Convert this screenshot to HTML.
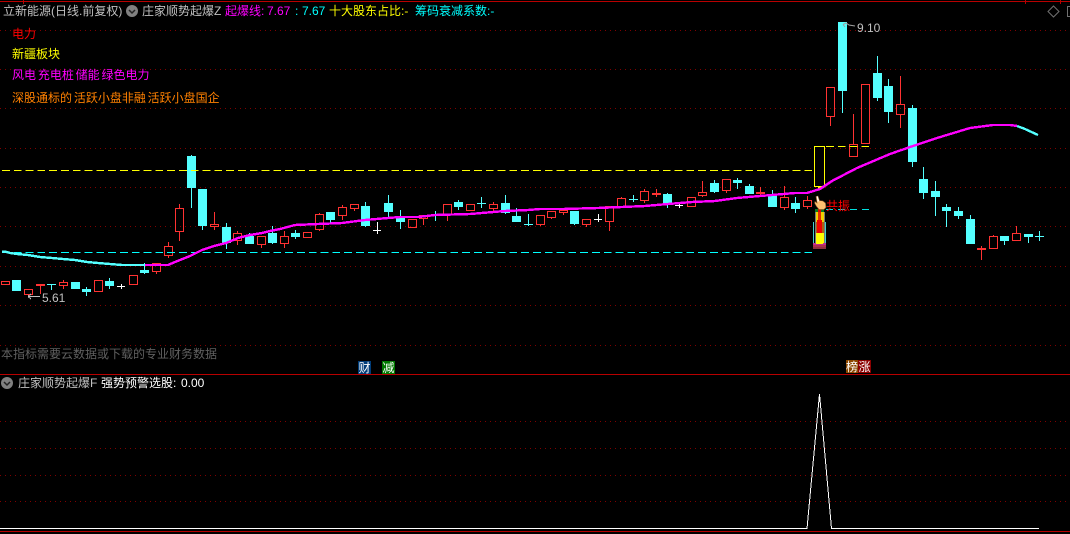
<!DOCTYPE html>
<html><head><meta charset="utf-8"><style>
html,body{margin:0;padding:0;background:#000;width:1070px;height:534px;overflow:hidden}
svg{display:block;position:absolute;left:0;top:0}
text{font-family:"WenQuanYi Zen Hei","Liberation Sans","Noto Sans CJK SC",sans-serif;font-size:12px;white-space:pre}
.n{font-family:"Liberation Sans",sans-serif}
</style></head><body>
<svg width="1070" height="534" viewBox="0 0 1070 534" xmlns="http://www.w3.org/2000/svg">
<rect width="1070" height="534" fill="#000"/>
<g shape-rendering="crispEdges">
<path d="M0 30.5H1070M0 69.5H1070M0 108.5H1070M0 148.5H1070M0 187.5H1070M0 226.5H1070M0 266.5H1070M0 305.5H1070M0 345.5H1070M0 421.5H1070M0 448.5H1070M0 475.5H1070M0 501.5H1070" stroke="#800000" stroke-dasharray="1 4" fill="none"/>
<path d="M0 1.5H1070M0 374.5H1070M0 531.5H1070" stroke="#b80000" fill="none"/>
<path d="M23.5 0V4M1025.5 0V4M1060.5 0V4" stroke="#b80000" fill="none"/>
<!-- red candles -->
<path fill="none" stroke="#ff3232" d="M1.5 281.5h8v3h-8zM24.5 289.5h8v5h-8zM28.5 295V297M36 284.5h9M36 285.5h9M40.5 284V294M59.5 282.5h8v3h-8zM63.5 280V282M63.5 286V289M94.5 280.5h8v11h-8zM129.5 275.5h8v9h-8zM152.5 263.5h8v8h-8zM156.5 272V274M164.5 246.5h8v9h-8zM168.5 242V246M168.5 256V258M175.5 208.5h8v23h-8zM179.5 204V208M179.5 232V241M210.5 224.5h8v2h-8zM214.5 212V224M214.5 227V230M233.5 233.5h8v7h-8zM237.5 231V233M237.5 241V245M257.5 236.5h8v8h-8zM261.5 245V248M280.5 236.5h8v7h-8zM284.5 231V236M284.5 244V248M303.5 232.5h8v5h-8zM315.5 214.5h8v15h-8zM319.5 213V214M319.5 230V231M338.5 207.5h8v8h-8zM342.5 205V207M342.5 216V220M350.5 204.5h8v4h-8zM354.5 209V211M408.5 219.5h8v8h-8zM419.5 215.5h8v3h-8zM423.5 219V225M443.5 204.5h8v10h-8zM447.5 215V221M466.5 204.5h8v6h-8zM489.5 204.5h8v4h-8zM493.5 202V204M493.5 209V211M536.5 215.5h8v9h-8zM540.5 225V226M547.5 211.5h8v6h-8zM551.5 218V219M559.5 210.5h8v2h-8zM563.5 213V215M582.5 219.5h8v5h-8zM586.5 225V227M605.5 206.5h8v15h-8zM609.5 222V231M617.5 198.5h8v9h-8zM621.5 197V198M640.5 191.5h8v9h-8zM644.5 189V191M644.5 201V203M652 193.5h9M652 194.5h9M656.5 189V197M687.5 197.5h8v9h-8zM698.5 192.5h8v3h-8zM702.5 181V192M702.5 196V197M722.5 179.5h8v11h-8zM726.5 191V193M756 193.5h9M756 192.5h9M760.5 187V196M780.5 197.5h8v10h-8zM784.5 186V197M784.5 208V210M803.5 200.5h8v6h-8zM807.5 196V200M807.5 207V209M826.5 87.5h8v29h-8zM830.5 117V126M849.5 144.5h8v12h-8zM853.5 114V144M861.5 84.5h8v59h-8zM896.5 104.5h8v10h-8zM900.5 76V104M900.5 115V128M977 248.5h9M977 249.5h9M981.5 246V260M989.5 236.5h8v12h-8zM993.5 235V236M1012.5 233.5h8v7h-8zM1016.5 226V233"/>
<!-- cyan bodies -->
<path fill="#54ffff" d="M12 280h9v11h-9zM71 282h9v7h-9zM82 289h9v3h-9zM105 281h9v5h-9zM140 270h9v3h-9zM187 156h9v32h-9zM198 189h9v37h-9zM222 227h9v16h-9zM245 236h9v8h-9zM268 233h9v10h-9zM291 233h9v4h-9zM326 212h9v8h-9zM361 206h9v20h-9zM384 203h9v9h-9zM396 216h9v6h-9zM431 215h9v1h-9zM454 202h9v5h-9zM501 203h9v10h-9zM512 216h9v6h-9zM570 211h9v13h-9zM663 194h9v10h-9zM710 183h9v9h-9zM733 180h9v3h-9zM745 186h9v8h-9zM768 196h9v11h-9zM791 203h9v6h-9zM838 22h9v69h-9zM873 73h9v25h-9zM884 86h9v26h-9zM908 108h9v54h-9zM919 179h9v14h-9zM931 191h9v6h-9zM942 207h9v4h-9zM954 211h9v5h-9zM966 219h9v25h-9zM1000 236h9v5h-9zM1024 234h9v3h-9z"/>
<path fill="none" stroke="#54ffff" d="M47 284.5h9M51.5 284V290M86.5 287V296M109.5 278V289M144.5 263V274M191.5 155V208M202.5 189V230M226.5 223V249M249.5 233V244M272.5 226V244M295.5 230V239M330.5 212V223M365.5 202V227M388.5 195V217M400.5 210V229M435.5 211V221M458.5 200V210M477 203.5h9M481.5 197V208M505.5 195V214M516.5 208V222M524 224.5h9M528.5 214V226M574.5 211V225M629 199.5h9M633.5 195V202M667.5 193V208M714.5 180V193M737.5 178V189M749.5 184V194M772.5 190V207M795.5 197V213M842.5 22V113M877.5 56V101M888.5 79V123M912.5 105V167M923.5 167V199M935.5 181V216M946.5 204V227M958.5 207V219M970.5 215V244M1004.5 236V245M1028.5 234V243M1035 236.5h9M1039.5 231V241"/>
<!-- white crosses -->
<path fill="none" stroke="#fff" d="M117 286.5h8M121.5 284V289M373 230.5h8M377.5 222V234M594 219.5h8M598.5 214V222M675 205.5h8M679.5 202V208"/>
<!-- yellow key candle -->
<rect x="814.5" y="146.5" width="10" height="40" fill="#000" stroke="#ffff00"/>
<rect x="818" y="187" width="3" height="3" fill="#ffff00"/>
<!-- dashes -->
<path fill="none" stroke="#ffff00" stroke-dasharray="7.8 4" d="M2 170.5H813M826 146.5H870"/>
<path fill="none" stroke="#00ffff" stroke-dasharray="7.8 4" d="M2 252.5H813"/>
<path fill="none" stroke="#00e0e0" stroke-dasharray="7 5" d="M826 209.5H870"/>
<!-- MA lines -->
<path fill="none" stroke="#54ffff" stroke-width="2.4" d="M2 252L5 251.5L10 253L17 254L28 255L40 257L52 258L63 259L75 260L87 262L98 263L110 264L122 265L145 265"/>
<path fill="none" stroke="#ff00ff" stroke-width="2.4" d="M145 265L168 265L175 262L190 256L202 250L214 246L226 243L238 238L250 235L262 233L270 231L280 229L295 225L318 224L342 223L365 220L388 218L400 217L418 217L435 215L470 214L505 211L528 210L540 209L563 209L598 208L622 207L645 206L668 204L692 202L715 201L737 198L760 196L772 195L795 193L807 193L820 189L832 181L857 168L890 154L913 146L937 138L970 128L993 125L1010 125L1017 126"/>
<path fill="none" stroke="#54ffff" stroke-width="2.4" d="M1017 126L1025 129L1038 135"/>
<!-- resonance stack -->
<rect x="815" y="209" width="9" height="3" fill="#0a7a20"/>
<rect x="818" y="209" width="3" height="3" fill="#e00000"/>
<rect x="815" y="212" width="10" height="32" fill="#777"/>
<rect x="816" y="212" width="8" height="10" fill="#f0d000"/>
<rect x="818" y="212" width="3" height="10" fill="#e03000"/>
<rect x="816" y="222" width="8" height="11" fill="#b06010"/>
<rect x="817" y="220" width="5" height="13" fill="#ee0000"/>
<rect x="816" y="233" width="8" height="11" fill="#ffff00"/>
<rect x="813" y="222" width="1" height="22" fill="#40d0d0"/>
<rect x="825" y="222" width="1" height="22" fill="#40d0d0"/>
<rect x="813" y="243" width="13" height="2" fill="#c03090"/>
<rect x="816" y="241" width="7" height="3" fill="#ffff00"/>
<rect x="813" y="245" width="13" height="2" fill="#b03050"/>
<rect x="813" y="247" width="13" height="2" fill="#903040"/>
</g>
<!-- hand -->
<path d="M816 196.5L818 196L819.5 200.5L823 201L825.5 203L826 207.5L824 209.5L819 209.5L816.5 206.5L814.5 203L815 201.5L817 203Z" fill="#ffc070" stroke="#7a4a20" stroke-width=".6"/>
<path d="M816.5 196.5L817.8 196.2L819 201L817.8 202Z" fill="#fff"/>
<!-- annotations -->
<path d="M28 296.5H40M28 296.5L31 294M28 296.5L31 299" stroke="#c0c0c0" fill="none" shape-rendering="crispEdges"/>
<text class="n" x="42" y="302" fill="#c0c0c0">5.61</text>
<path d="M843 24.5L846 23L849 25L855 26M843 24.5L845 27" stroke="#a0a0a0" fill="none"/>
<text class="n" x="857" y="32" fill="#c0c0c0">9.10</text>
<!-- header -->
<text x="3" y="15" fill="#c0c0c0">立新能源(日线.前复权)</text>
<circle cx="132" cy="11" r="6" fill="#808080"/>
<path d="M129 10l3 3 3-3" stroke="#222" stroke-width="1.5" fill="none"/>
<text x="142" y="15" fill="#c0c0c0">庄家顺势起爆Z</text>
<text x="225" y="15" fill="#ff00ff">起爆线:</text>
<text class="n" x="267" y="15" fill="#ff00ff">7.67</text>
<text class="n" x="295" y="15" fill="#00ffff">:</text>
<text class="n" x="302" y="15" fill="#00ffff">7.67</text>
<text x="329" y="15" fill="#ffff00">十大股东占比:-</text>
<text x="415" y="15" fill="#00ffff">筹码衰减系数:-</text>
<text x="12" y="38" fill="#ff0000">电力</text>
<text x="12" y="58" fill="#ffff00">新疆板块</text>
<text x="12" y="79" fill="#ff00ff" word-spacing="-1.5">风电 充电桩 储能 绿色电力</text>
<text x="12" y="102" fill="#ff8000" word-spacing="-1.5">深股通标的 活跃小盘非融 活跃小盘国企</text>
<text x="1" y="358" fill="#606060">本指标需要云数据或下载的专业财务数据</text>
<text x="826" y="210" fill="#ff0000">共振</text>
<!-- tags -->
<g shape-rendering="crispEdges">
<rect x="358" y="361" width="13" height="13" fill="#003c78"/>
<rect x="382" y="361" width="13" height="13" fill="#007800"/>
<rect x="846" y="360" width="12" height="13" fill="#8c4800"/>
<rect x="858" y="360" width="13" height="13" fill="#8c0000"/>
</g>
<text x="358.5" y="372" fill="#fff">财</text>
<text x="382.5" y="372" fill="#fff">减</text>
<text x="846" y="371" fill="#fff">榜</text>
<text x="858.5" y="371" fill="#fff">涨</text>
<!-- lower panel header -->
<circle cx="7" cy="383" r="6" fill="#808080"/>
<path d="M4 382l3 3 3-3" stroke="#222" stroke-width="1.5" fill="none"/>
<text x="18" y="387" fill="#c0c0c0">庄家顺势起爆F</text>
<text x="101" y="387" fill="#ffffff">强势预警选股:</text>
<text class="n" x="181" y="387" fill="#ffffff">0.00</text>
<!-- lower line -->
<path d="M0 528.5H807L819.5 394L831.5 528.5H1039" fill="none" stroke="#fff" stroke-width="1" shape-rendering="crispEdges"/>
<!-- top-right icons -->
<path d="M1053.5 6L1059 11.5L1053.5 17L1048 11.5Z" fill="none" stroke="#707070"/>
<path d="M1070 6.5H1067.5V16.5H1070" fill="none" stroke="#707070"/>
</svg>
</body></html>
